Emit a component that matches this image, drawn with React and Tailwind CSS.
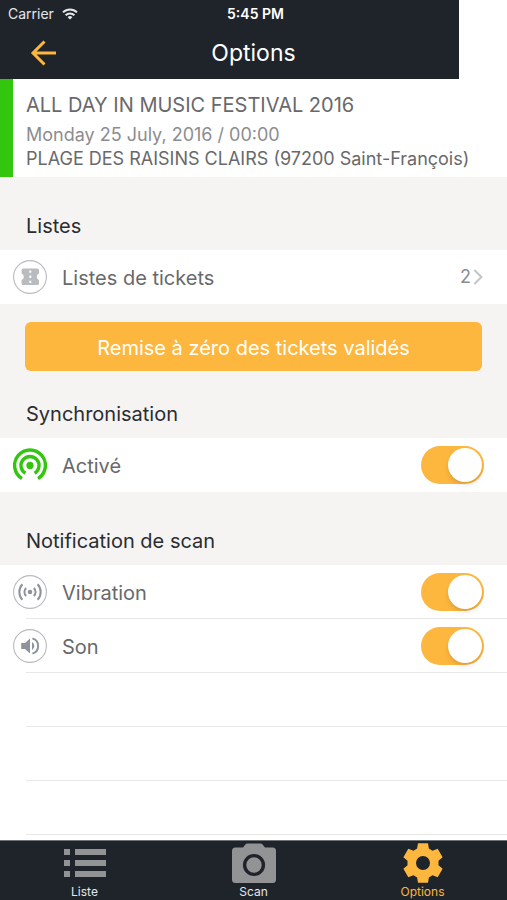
import React, { useState } from "react";

const EMPTY_ROWS = [1, 2, 3];

function WifiIcon() {
   return (
      <svg viewBox="0 0 16 12" className="w-4 h-3" fill="none" stroke="currentColor" strokeWidth="2">
         <path d="M1 4.4a10 10 0 0 1 14 0" />
         <path d="M3.6 7.2a6.3 6.3 0 0 1 8.8 0" />
         <path d="M8 11.6 5.6 9.2a3.4 3.4 0 0 1 4.8 0z" fill="currentColor" stroke="none" />
      </svg>
   );
}

function BackIcon() {
   return (
      <svg viewBox="0 0 26 26" className="w-[26px] h-[26px]" fill="none" stroke="currentColor" strokeWidth="3">
         <path d="M26 13H3M14.5 1.5 3 13l11.5 11.5" />
      </svg>
   );
}

function TicketIcon() {
   return (
      <svg viewBox="0 0 34 34" className="size-[34px]">
         <circle cx="17" cy="17" r="16.4" fill="none" stroke="#b9bbbf" strokeWidth="1.1" />
         <path
            d="M10.2 8.6h14.2A1.6 1.6 0 0 1 26 10.2v3.4a3.4 3.4 0 0 0 0 6.4v3.4a1.6 1.6 0 0 1-1.6 1.6H10.2a1.6 1.6 0 0 1-1.6-1.6V20a3.4 3.4 0 0 0 0-6.4v-3.4a1.6 1.6 0 0 1 1.6-1.6z"
            fill="#b9bbbf"
         />
         <path d="M17.3 10.5v2.3M17.3 15.6v2.3M17.3 20.7V23" stroke="#fff" strokeWidth="1.9" />
      </svg>
   );
}

function SyncIcon() {
   return (
      <svg viewBox="0 0 34 34" className="size-[34px]" fill="none" stroke="#33c60e" strokeWidth="3.4">
         <path d="M9 30.6a15.4 15.4 0 1 1 16 0" />
         <path d="M12.4 25.2a9 9 0 1 1 9.2 0" />
         <circle cx="17" cy="17.4" r="3.6" fill="#33c60e" stroke="none" />
      </svg>
   );
}

function VibrationIcon() {
   return (
      <svg viewBox="0 0 34 34" className="size-[34px]" fill="none" stroke="#8e939b">
         <circle cx="17" cy="17" r="16.4" stroke="#b9bbbf" strokeWidth="1.1" />
         <circle cx="17" cy="17" r="2.3" fill="#8e939b" stroke="none" />
         <path
            d="M13.2 13a5.4 5.4 0 0 0 0 8M20.8 13a5.4 5.4 0 0 1 0 8M9.4 9.2a11.4 11.4 0 0 0 0 15.6M24.6 9.2a11.4 11.4 0 0 1 0 15.6"
            strokeWidth="2"
         />
      </svg>
   );
}

function SoundIcon() {
   return (
      <svg viewBox="0 0 34 34" className="size-[34px]" fill="none" stroke="#8e939b">
         <circle cx="17" cy="17" r="16.4" stroke="#b9bbbf" strokeWidth="1.1" />
         <path d="M8.2 14h3.8l5-4.6v15.2L12 20H8.2z" fill="#8e939b" stroke="none" />
         <path d="M19 13a4.6 4.6 0 0 1 0 8z" fill="#8e939b" stroke="none" />
         <path d="M19.4 9.4a7.9 7.9 0 0 1 0 15.2" strokeWidth="2" />
      </svg>
   );
}

function ListIcon() {
   return (
      <svg viewBox="0 0 43 30" className="w-[43px] h-[30px]" fill="currentColor">
         <path d="M1 1h6v6H1zM12 1h31v6H12zM1 12h6v6H1zM12 12h31v6H12zM1 23h6v6H1zM12 23h31v6H12z" />
      </svg>
   );
}

function CameraIcon() {
   return (
      <svg viewBox="0 0 44 40" className="w-11 h-10">
         <path
            d="M3.5 4.5H11L13.6 1.2A2.4 2.4 0 0 1 15.4.4h13.2a2.4 2.4 0 0 1 1.8.8L33 4.5h7.5A3.5 3.5 0 0 1 44 8v28.5a3.5 3.5 0 0 1-3.5 3.5h-37A3.5 3.5 0 0 1 0 36.5V8a3.5 3.5 0 0 1 3.5-3.5z"
            fill="currentColor"
         />
         <circle cx="22" cy="22" r="9.4" fill="none" stroke="#1f242a" strokeWidth="3.4" />
      </svg>
   );
}

function GearIcon() {
   return (
      <svg viewBox="0 0 40 40" className="size-10" fill="currentColor">
         <path
            fillRule="evenodd"
            d="M15 .2h10l.9 5.4 3.6 2.1 5.2-1.9 4.9 8.4-4.1 3.6v4.4l4.1 3.6-4.9 8.4-5.2-1.9-3.6 2.1-.9 5.4H15l-.9-5.4-3.6-2.1-5.2 1.9-4.9-8.4 4.1-3.6v-4.4L.4 14.2l4.9-8.4 5.2 1.9 3.6-2.1zM20 13a7 7 0 1 0 0 14 7 7 0 0 0 0-14z"
         />
      </svg>
   );
}

function SectionTitle({ children, className }) {
   return (
      <h2 className={`flex items-end px-[26px] pb-3 text-xl leading-6 text-[#2b2c2e] ${className}`}>
         {children}
      </h2>
   );
}

// Row with an icon, a label and an on/off switch
function SwitchRow({ id, icon, label, checked, onChange }) {
   return (
      <div className="flex items-center h-[54px] pl-[13px] pr-[23px] bg-white">
         {icon}
         <label htmlFor={id} className="flex-1 ml-[15px] pt-0.5 text-xl text-[#68696b]">
            {label}
         </label>
         <input
            id={id}
            type="checkbox"
            role="switch"
            checked={checked}
            onChange={onChange}
            className="appearance-none flex items-center w-[63px] h-[38px] px-0.5 rounded-full bg-gray-200 checked:bg-[#fdb63e] before:block before:size-[34px] before:rounded-full before:bg-white before:shadow-md checked:before:ml-auto"
         />
      </div>
   );
}

export default function App() {
   const [settings, setSettings] = useState({ sync: true, vibration: true, sound: true });

   const toggle = (key) => setSettings({ ...settings, [key]: !settings[key] });

   return (
      <div className="flex flex-col min-h-screen bg-white font-['Inter','Liberation_Sans',sans-serif]">
         {/* Status bar and navigation */}
         <div className="relative">
            <header className="w-[459px] max-w-full h-[79px] bg-[#1f242a]"></header>
            <div className="absolute inset-0 flex flex-col text-white">
               <div className="grid grid-cols-3 items-center h-7 px-2 text-sm">
                  <span className="flex items-center gap-2 text-gray-200">
                     Carrier <WifiIcon />
                  </span>
                  <span className="pl-1 text-center font-semibold">5:45 PM</span>
               </div>
               <div className="grid grid-cols-3 items-center flex-1 px-[30px] pb-0.5">
                  <button type="button" aria-label="Retour" className="justify-self-start text-[#fdb63e]">
                     <BackIcon />
                  </button>
                  <h1 className="text-center text-[23px] leading-8">Options</h1>
               </div>
            </div>
         </div>

         {/* Event */}
         <section className="h-[98px] pt-3 pl-[13px] border-l-[13px] border-[#33c60e] bg-white">
            <p className="text-xl leading-7 text-[#68696b]">ALL DAY IN MUSIC FESTIVAL 2016</p>
            <p className="mt-1 text-lg leading-6 text-[#8c8d8f]">Monday 25 July, 2016 / 00:00</p>
            <p className="text-lg leading-6 text-[#68696b]">
               PLAGE DES RAISINS CLAIRS (97200 Saint-François)
            </p>
         </section>

         <main className="flex-1">
            <div className="bg-[#f5f4f3]">
               <SectionTitle className="h-[73px]">Listes</SectionTitle>
               <a href="#listes" className="flex items-center h-[54px] pl-[13px] pr-6 bg-white">
                  <TicketIcon />
                  <span className="flex-1 ml-[15px] pt-0.5 text-xl text-[#68696b]">Listes de tickets</span>
                  <span className="text-lg text-[#8c8d8f]">2</span>
                  <svg viewBox="0 0 10 16" className="w-2.5 h-4 ml-0.5" fill="none" stroke="#c4c5c8" strokeWidth="2">
                     <path d="m1.4 1 7 7-7 7" />
                  </svg>
               </a>
               <div className="px-[25px] pt-[18px]">
                  <button type="button" className="w-full h-[49px] pt-0.5 rounded-md bg-[#fdb63e] text-xl text-white">
                     Remise à zéro des tickets validés
                  </button>
               </div>
               <SectionTitle className="h-[67px]">Synchronisation</SectionTitle>
               <SwitchRow
                  id="sync"
                  icon={<SyncIcon />}
                  label="Activé"
                  checked={settings.sync}
                  onChange={() => toggle("sync")}
               />
               <SectionTitle className="h-[73px]">Notification de scan</SectionTitle>
            </div>
            <SwitchRow
               id="vibration"
               icon={<VibrationIcon />}
               label="Vibration"
               checked={settings.vibration}
               onChange={() => toggle("vibration")}
            />
            <hr className="-mt-px ml-[26px] border-[#e8e8e8]" />
            <SwitchRow
               id="sound"
               icon={<SoundIcon />}
               label="Son"
               checked={settings.sound}
               onChange={() => toggle("sound")}
            />
            <hr className="-mt-px ml-[26px] border-[#e8e8e8]" />
            {EMPTY_ROWS.map((row) => (
               <div key={row} className="h-[54px] ml-[26px] border-b border-[#e8e8e8]"></div>
            ))}
         </main>

         {/* Tabs */}
         <nav className="grid grid-cols-3 h-[60px] border-t border-[#6d7376] bg-[#1f242a] text-xs leading-[18px] text-gray-200">
            <a href="#liste" className="flex flex-col items-center pt-0.5">
               <span className="flex items-center h-10 text-[#929395]">
                  <ListIcon />
               </span>
               Liste
            </a>
            <a href="#scan" className="flex flex-col items-center pt-0.5">
               <span className="flex items-center h-10 text-[#929395]">
                  <CameraIcon />
               </span>
               Scan
            </a>
            <a href="#options" className="flex flex-col items-center pt-0.5 text-[#fdb63e]">
               <GearIcon />
               Options
            </a>
         </nav>
      </div>
   );
}
